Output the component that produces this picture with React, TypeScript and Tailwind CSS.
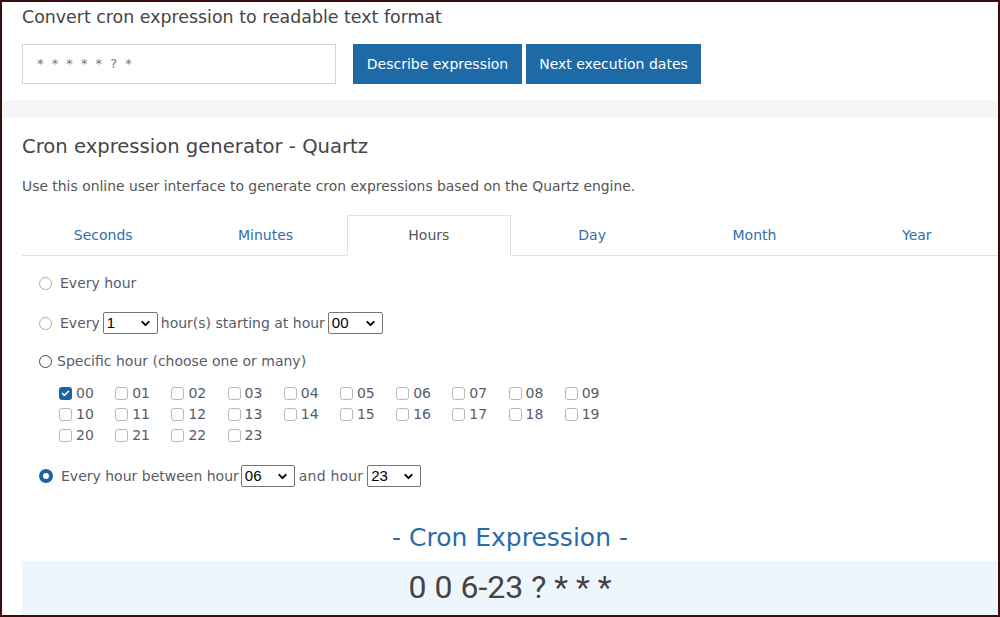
import { Check, ChevronDown } from "lucide-react";

const tabs = ["Seconds", "Minutes", "Hours", "Day", "Month", "Year"];
const hours = Array.from({ length: 24 }, (_, i) => String(i).padStart(2, "0"));

const Select = ({ value, width }: { value: string; width: string }) => (
  <span
    className={`${width} mx-[2px] inline-flex h-[22px] items-center justify-between rounded-[2px] border border-[#767676] bg-white pl-[3px] pr-[5px] font-['Liberation_Sans'] text-[15px] text-black`}
  >
    {value}
    <ChevronDown size={13} strokeWidth={3.5} className="text-black" />
  </span>
);

const Radio = ({ checked, dark }: { checked?: boolean; dark?: boolean }) =>
  checked ? (
    <span className="inline-block h-[14px] w-[14px] rounded-full border-[4px] border-[#1b64a4] bg-white" />
  ) : (
    <span
      className={`inline-block h-[13px] w-[13px] rounded-full border bg-white ${
        dark ? "border-[#444]" : "border-[#aaa]"
      }`}
    />
  );

const Box = ({ checked }: { checked?: boolean }) =>
  checked ? (
    <span className="inline-flex h-[13px] w-[13px] items-center justify-center rounded-[3px] bg-[#1b64a4]">
      <Check size={9} strokeWidth={4} className="text-white" />
    </span>
  ) : (
    <span className="inline-block h-[13px] w-[13px] rounded-[3px] border border-[#b8b8b8] bg-white" />
  );

export default function App() {
  return (
    <div className="h-[617px] w-[1000px] overflow-hidden border-2 border-[#3a0c0c] bg-white font-['DejaVu_Sans'] text-[#585c68]">
      {/* describe section */}
      <section className="h-[98px] pl-[20px] pt-[3px]">
        <h2 className="text-[17.4px] leading-[24px] text-[#454545]">
          Convert cron expression to readable text format
        </h2>
        <div className="mt-[15px] flex items-center">
          <div className="flex h-[40px] w-[314px] items-center border border-[#d4d4d4] pl-[14px] text-[13px] tracking-[2px] text-[#777]">
            * * * * * ? *
          </div>
          <button className="ml-[17px] h-[40px] w-[169px] bg-[#1d6aa6] text-[14px] text-white">
            Describe expression
          </button>
          <button className="ml-[4px] h-[40px] w-[175px] bg-[#1d6aa6] text-[14px] text-white">
            Next execution dates
          </button>
        </div>
      </section>
      <div className="h-[18px] bg-[#f5f6f8]" />

      {/* generator */}
      <section className="pl-[20px] pt-[16px]">
        <h2 className="text-[19.6px] leading-[26px] text-[#454545]">
          Cron expression generator - Quartz
        </h2>
        <p className="mt-[16px] text-[13.9px] leading-[20px] text-[#555]">
          Use this online user interface to generate cron expressions based on the Quartz engine.
        </p>

        <div className="mt-[19px] flex border-b border-[#dee2e6]">
          {tabs.map((t) => (
            <div
              key={t}
              className={`-mb-px flex h-[41px] flex-1 items-center justify-center text-[14px] ${
                t === "Hours"
                  ? "border border-b-white border-[#dee2e6] bg-white text-[#555]"
                  : "text-[#2f6eb0]"
              }`}
            >
              {t}
            </div>
          ))}
        </div>

        <div className="pl-[17px] text-[14px]">
          <div className="mt-[17px] flex h-[20px] items-center gap-[8px]">
            <Radio />
            Every hour
          </div>
          <div className="mt-[19px] flex h-[22px] items-center">
            <Radio />
            <span className="ml-[8px] mr-[1px]">Every</span>
            <Select value="1" width="w-[55px]" />
            <span className="mx-[1px]">hour(s) starting at hour</span>
            <Select value="00" width="w-[55px]" />
          </div>
          <div className="mt-[17px] flex h-[20px] items-center gap-[5px]">
            <Radio dark />
            Specific hour (choose one or many)
          </div>
          <div className="mt-[12px] ml-[20px] grid grid-cols-[repeat(10,56.2px)] gap-y-[1px]">
            {hours.map((h) => (
              <div key={h} className="flex h-[20px] items-center gap-[4px]">
                <Box checked={h === "00"} />
                {h}
              </div>
            ))}
          </div>
          <div className="mt-[20px] flex h-[22px] items-center">
            <Radio checked />
            <span className="ml-[8px]">Every hour between hour</span>
            <Select value="06" width="w-[54px]" />
            <span className="mx-[2px] tracking-[0.2px]">and hour</span>
            <Select value="23" width="w-[54px]" />
          </div>
        </div>

        <div className="mt-[35px] text-center text-[25px] leading-[32px] text-[#2a6ca8]">
          - Cron Expression -
        </div>
        <div className="mt-[7px] flex h-[60px] justify-center bg-[#eef6fd] pt-[6px] font-['Roboto'] text-[32px] leading-[40px] text-[#444]">
          0 0 6-23 ? * * *
        </div>
      </section>
    </div>
  );
}
